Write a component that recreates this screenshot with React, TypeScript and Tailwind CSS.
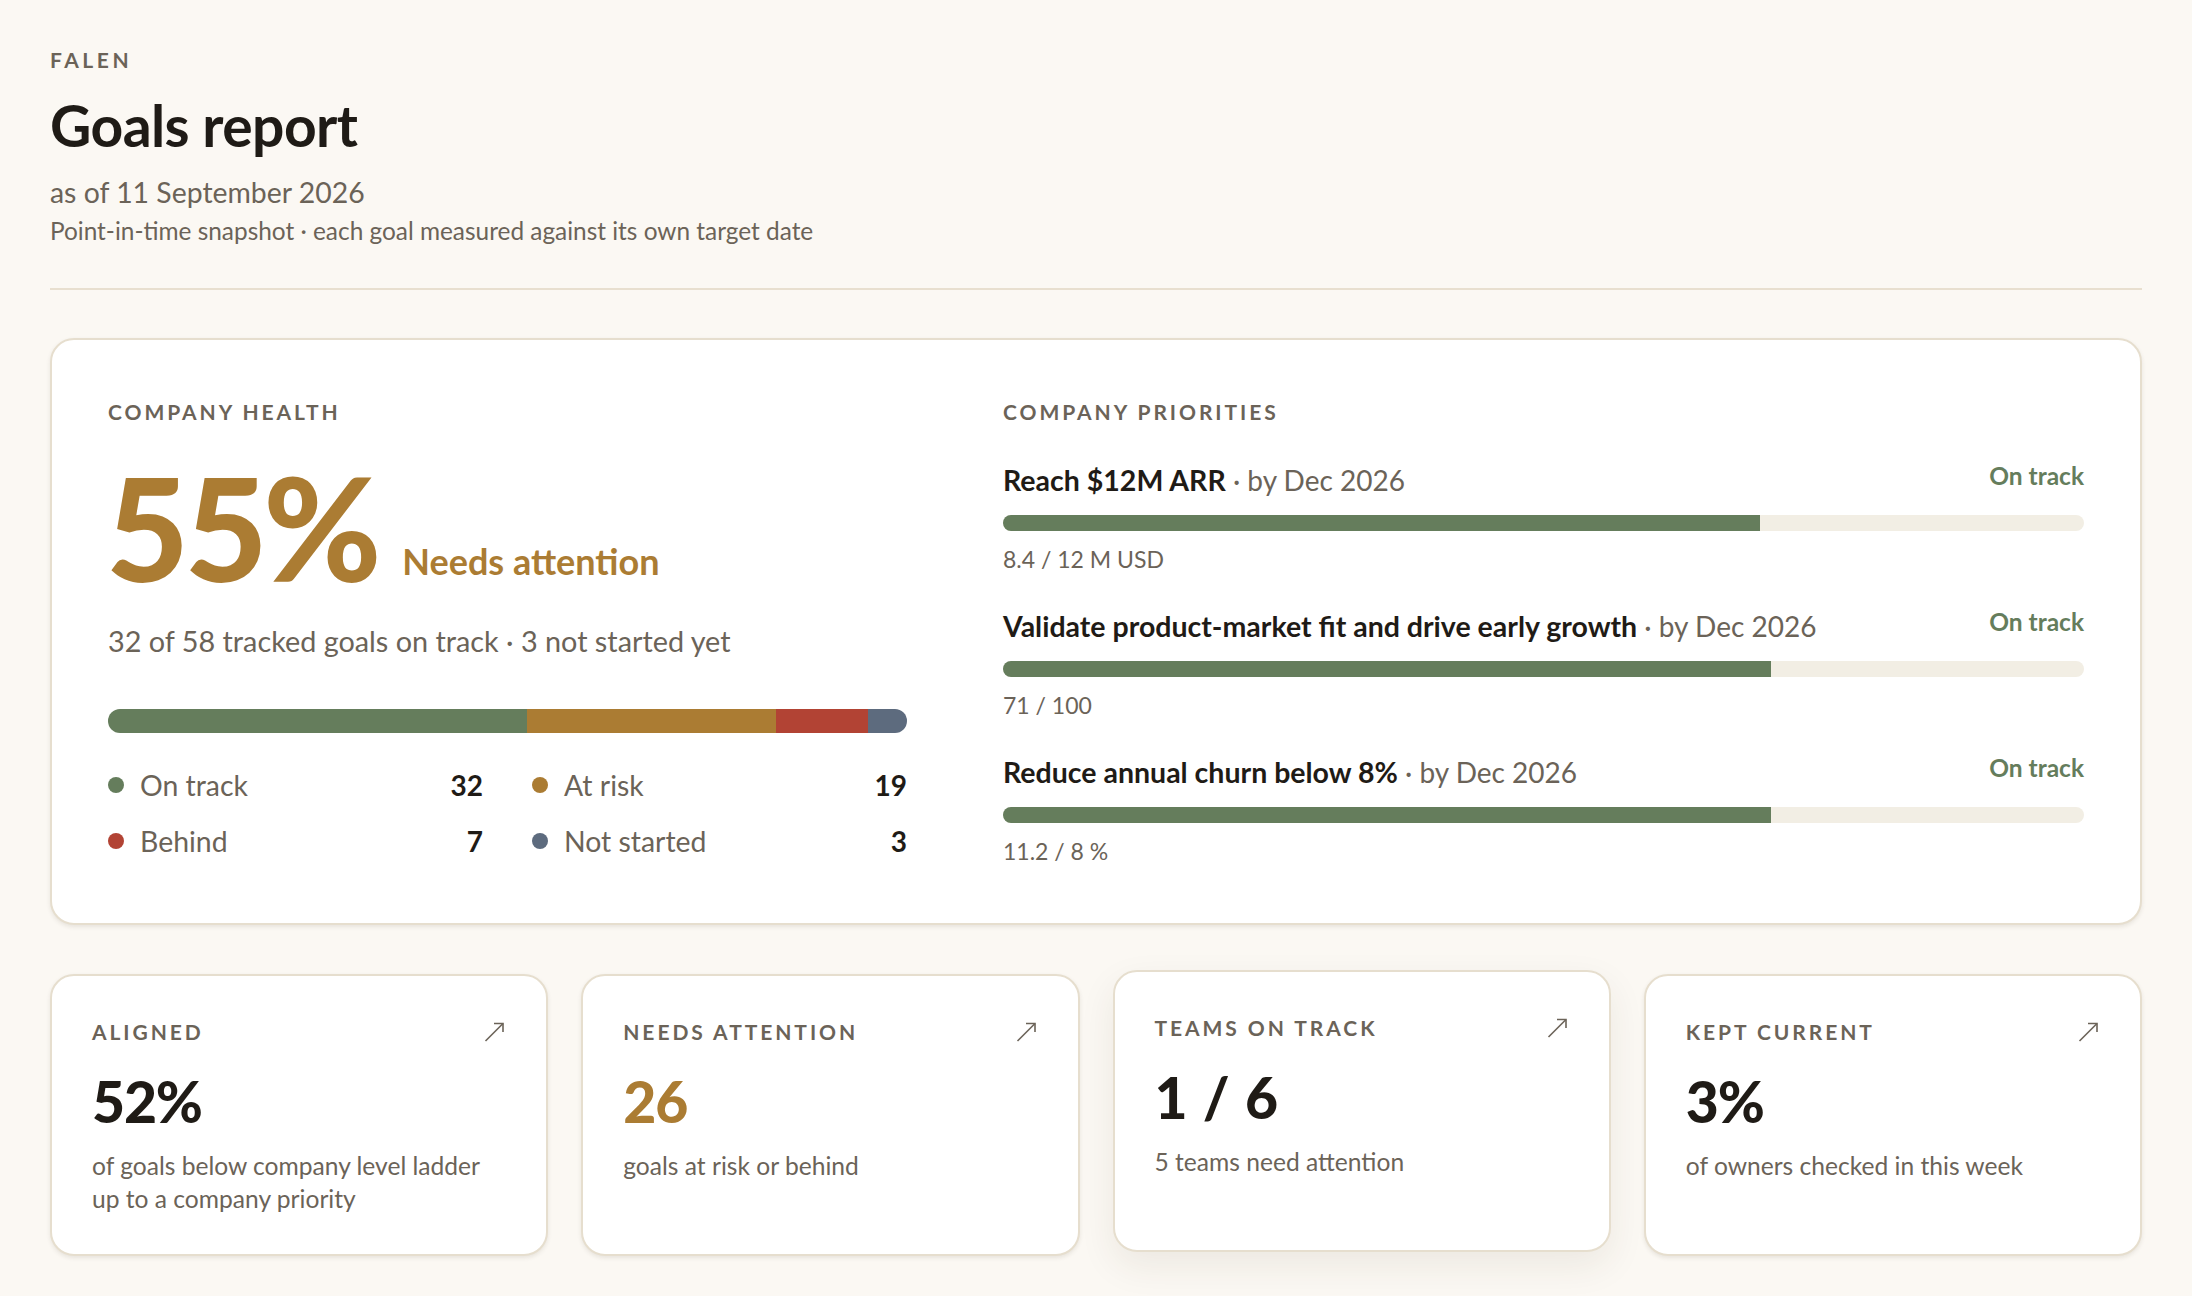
import React from 'react';

const font = { fontFamily: 'Lato, "Open Sans", sans-serif' };

const legend = [
  { label: 'On track', value: 32, dot: 'bg-[#657d5c]' },
  { label: 'At risk', value: 19, dot: 'bg-[#ab7c33]' },
  { label: 'Behind', value: 7, dot: 'bg-[#b24334]' },
  { label: 'Not started', value: 3, dot: 'bg-[#5d6b7e]' },
];

const priorities = [
  { title: 'Reach $12M ARR', meta: '8.4 / 12 M USD', pct: 70 },
  { title: 'Validate product-market fit and drive early growth', meta: '71 / 100', pct: 71 },
  { title: 'Reduce annual churn below 8%', meta: '11.2 / 8 %', pct: 71 },
];

const stats = [
  { label: 'ALIGNED', value: '52%', desc: 'of goals below company level ladder up to a company priority', amber: false, raised: false },
  { label: 'NEEDS ATTENTION', value: '26', desc: 'goals at risk or behind', amber: true, raised: false },
  { label: 'TEAMS ON TRACK', value: '1 / 6', desc: '5 teams need attention', amber: false, raised: true },
  { label: 'KEPT CURRENT', value: '3%', desc: 'of owners checked in this week', amber: false, raised: false },
];

const Arrow = () => (
  <svg width="20" height="20" viewBox="0 0 20 20" fill="none" stroke="#6b6358" strokeWidth="1.6" className="mr-[2px] mt-[3px]">
    <path d="M1.5 19 L19 1.5" />
    <path d="M10 1.5 H19 V10" />
  </svg>
);

export default function App() {
  return (
    <div className="min-h-[1296px] bg-[#fbf8f3] px-[50px] pt-[47px] text-[#1f1b16]" style={font}>
      {/* Header */}
      <div className="border-b-2 border-[#e8dfcf] pb-[41px]">
        <div className="text-[21px] leading-[26px] font-bold tracking-[0.17em] text-[#6b6358]">FALEN</div>
        <h1 className="mt-[19px] text-[57px] leading-[66px] font-bold tracking-[-0.01em]">Goals report</h1>
        <div className="mt-[16px] text-[28.4px] leading-[36px] text-[#6b6358]">as of 11 September 2026</div>
        <div className="mt-[5px] text-[24.4px] leading-[32px] text-[#6b6358]">
          Point-in-time snapshot · each goal measured against its own target date
        </div>
      </div>

      {/* Company card */}
      <div className="mt-[48px] h-[587px] rounded-[24px] border-2 border-[#e6dece] bg-white px-[56px] pt-[59px] shadow-[0_2px_4px_rgba(60,50,30,0.1)] flex gap-[96px]">
        <div className="w-[799px] shrink-0">
          <div className="text-[21px] leading-[26px] font-bold tracking-[0.14em] text-[#6b6358]">COMPANY HEALTH</div>
          <div className="mt-[27px] flex items-end gap-[25px]">
            <span className="-ml-[2px] text-[143px] leading-[150px] font-black tracking-[-0.03em] text-[#ab7c33]">55%</span>
            <span className="mb-[19px] text-[36px] leading-[44px] font-bold text-[#ab7c33]">Needs attention</span>
          </div>
          <div className="mt-[21px] text-[28.8px] leading-[36px] text-[#6b6358]">32 of 58 tracked goals on track · 3 not started yet</div>
          <div className="mt-[50px] flex h-[24px] overflow-hidden rounded-full">
            <div className="w-[419px] bg-[#657d5c]" />
            <div className="w-[249px] bg-[#ab7c33]" />
            <div className="w-[92px] bg-[#b24334]" />
            <div className="flex-1 bg-[#5d6b7e]" />
          </div>
          <div className="mt-[34px] grid grid-cols-2 gap-x-[49px] gap-y-[20px]">
            {legend.map((l) => (
              <div key={l.label} className="flex h-[36px] items-center">
                <span className={`mr-[16px] h-[16px] w-[16px] rounded-full ${l.dot}`} />
                <span className="flex-1 text-[28.4px] text-[#6b6358]">{l.label}</span>
                <span className="text-[28px] font-bold">{l.value}</span>
              </div>
            ))}
          </div>
        </div>

        <div className="flex-1">
          <div className="text-[21px] leading-[26px] font-bold tracking-[0.14em] text-[#6b6358]">COMPANY PRIORITIES</div>
          <div className="mt-[35px] flex flex-col gap-[31px]">
            {priorities.map((p) => (
              <div key={p.title}>
                <div className="flex items-start justify-between">
                  <div className="text-[28px] leading-[40px]">
                    <span className="text-[28.5px] font-bold">{p.title}</span>
                    <span className="text-[#6b6358]"> · by Dec 2026</span>
                  </div>
                  <span className="text-[24.5px] leading-[32px] font-bold text-[#657d5c]">On track</span>
                </div>
                <div className="mt-[15px] h-[16px] overflow-hidden rounded-full bg-[#f2eee4]">
                  <div className="h-full bg-[#657d5c]" style={{ width: `${p.pct}%` }} />
                </div>
                <div className="mt-[12px] text-[23px] leading-[32px] text-[#6b6358]">{p.meta}</div>
              </div>
            ))}
          </div>
        </div>
      </div>

      {/* Stat cards */}
      <div className="mt-[49px] grid grid-cols-4 gap-[33px]">
        {stats.map((s) => (
          <div
            key={s.label}
            className={`h-[282px] rounded-[24px] border-2 border-[#e6dece] bg-white px-[40px] pt-[43px] ${
              s.raised ? '-translate-y-[4px] shadow-[0_14px_36px_rgba(60,50,30,0.08)]' : 'shadow-[0_2px_4px_rgba(60,50,30,0.1)]'
            }`}
          >
            <div className="flex items-start justify-between">
              <span className="text-[21px] leading-[26px] font-bold tracking-[0.14em] text-[#6b6358]">{s.label}</span>
              <Arrow />
            </div>
            <div className={`mt-[21px] text-[57px] leading-[70px] font-black tracking-[-0.02em] [word-spacing:4px] ${s.amber ? 'text-[#ab7c33]' : ''}`}>{s.value}</div>
            <div className="mt-[13px] text-[24.6px] leading-[33px] text-[#6b6358]">{s.desc}</div>
          </div>
        ))}
      </div>
    </div>
  );
}
